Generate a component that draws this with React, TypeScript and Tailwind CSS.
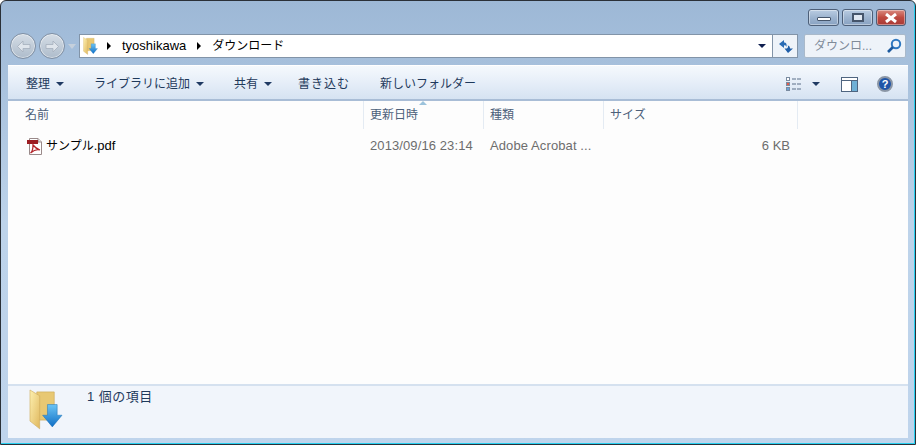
const FONT = "font-['Liberation_Sans','Noto_Sans_CJK_JP',sans-serif]"

function Caret({ className = 'border-t-[#1f3a63]' }: { className?: string }) {
  return <span className={`inline-block h-0 w-0 border-x-[4px] border-t-[4px] border-x-transparent ${className}`} />
}

function Crumb({ className }: { className: string }) {
  return <span className={`inline-block h-0 w-0 shrink-0 border-y-[4px] border-l-[4px] border-y-transparent border-l-black ${className}`} />
}

function FolderIcon({ size }: { size: number }) {
  return (
    <svg width={size} height={size * 1.2} viewBox="0 0 35 42">
      <defs>
        <linearGradient id={`f${size}`} x1="0" y1="0" x2="1" y2="1">
          <stop offset="0" stopColor="#fdf0b0" />
          <stop offset="1" stopColor="#e0b85e" />
        </linearGradient>
        <linearGradient id={`a${size}`} x1="0" y1="0" x2="0" y2="1">
          <stop offset="0" stopColor="#6cc4f4" />
          <stop offset="1" stopColor="#0f6fc6" />
        </linearGradient>
      </defs>
      <path d="M8 3 H26 V32 H8 Z" fill="#e8c873" stroke="#c9a552" strokeWidth="0.6" />
      <path d="M1 1 L11 7 V41 L1 33 Z" fill={`url(#f${size})`} stroke="#cda85a" strokeWidth="0.6" />
      <path d="M19 16 H29 V27 H34 L24 39 L14 27 H19 Z" fill={`url(#a${size})`} stroke="#1a6fb5" strokeWidth="0.5" />
    </svg>
  )
}

function PdfIcon() {
  return (
    <svg width="17" height="17" viewBox="0 0 17 17">
      <path d="M3.500 .5 H12 L15.500 4 V16.500 H3.500 Z" fill="#fff" stroke="#9a8a8a" />
      <path d="M12 .5 V4 H15.500" fill="#e8e8e8" stroke="#9a8a8a" />
      <rect x="1" y="2" width="11" height="4" fill="#9c1c22" />
      <path d="M7 7 C7 12 6 14 4.500 15 C8 12 11 11 14 12 C11 11 8.500 9 7 7 Z" fill="none" stroke="#b3262c" strokeWidth="1.300" />
    </svg>
  )
}

function WinBtn({ w, red, children }: { w: string; red?: boolean; children: React.ReactNode }) {
  return (
    <div
      className={`flex h-[17px] items-center justify-center rounded-[3px] border border-[#4d5f78] shadow-[inset_0_0_0_1px_rgba(255,255,255,0.4)] ${w} ${
        red ? 'bg-gradient-to-b from-[#d98a80] via-[#bf4a40] to-[#a83a36]' : 'bg-gradient-to-b from-[#b9cce2] via-[#9db4cf] to-[#88a2c2]'
      }`}
    >
      {children}
    </div>
  )
}

function NavCircle({ dir }: { dir: 'l' | 'r' }) {
  return (
    <div className="flex h-[26px] w-[26px] items-center justify-center rounded-full border border-[#7f8fa3] bg-gradient-to-b from-[#d5dde6] to-[#aebccb] shadow-[inset_0_0_0_1px_rgba(255,255,255,0.5)]">
      <svg width="15" height="13" viewBox="0 0 15 13">
        <path
          d={dir === 'l' ? 'M7 1 L1.500 6.500 L7 12 V8.500 H14 V4.500 H7 Z' : 'M8 1 L13.500 6.500 L8 12 V8.500 H1 V4.500 H8 Z'}
          fill="#dfe5ec"
          stroke="#a4afbc"
          strokeWidth="0.8"
        />
      </svg>
    </div>
  )
}

const ACTIONS = [
  { label: '整理', caret: true, cls: 'ml-[18px] w-[68px]' },
  { label: 'ライブラリに追加', caret: true, cls: 'w-[140px]' },
  { label: '共有', caret: true, cls: 'w-[50px]' },
  { label: '書き込む', caret: false, cls: 'ml-[14px] w-[82px] tracking-[1px]' },
  { label: '新しいフォルダー', caret: false, cls: 'w-[110px]' },
]

const COLUMNS = [
  { label: '名前', cls: 'w-[356px] pl-[17px]' },
  { label: '更新日時', cls: 'w-[120px] pl-[6px]' },
  { label: '種類', cls: 'w-[120px] pl-[6px]' },
  { label: 'サイズ', cls: 'w-[194px] pl-[6px]' },
]

export default function App() {
  return (
    <div className={`${FONT} flex h-[445px] w-[916px] flex-col overflow-hidden rounded-t-[6px] border-t border-l border-r border-b border-[#2a3038] bg-gradient-to-b from-[#9db8d6] via-[#bdd3ea] to-[#bfd4ec] text-[12px] shadow-[inset_-1px_-1px_0_#28d0f0]`}>
      {/* title bar */}
      <div className="flex h-[25px] shrink-0 items-end justify-end gap-[3px] pr-[9px]">
        <WinBtn w="w-[31px]"><span className="mt-[2px] h-[4px] w-[14px] rounded-[1px] border border-[#45556b] bg-white" /></WinBtn>
        <WinBtn w="w-[31px]"><span className="h-[9px] w-[12px] border-2 border-[#45556b] bg-[#dfe7f1]" /></WinBtn>
        <WinBtn w="w-[30px]" red>
          <svg width="14" height="10" viewBox="0 0 14 10">
            <path d="M2 1 L12 9 M12 1 L2 9" stroke="#fff" strokeWidth="3" />
          </svg>
        </WinBtn>
      </div>

      {/* nav row */}
      <div className="mt-[8px] flex h-[24px] shrink-0 items-center pl-[9px]">
        <div className="flex gap-[3px]">
          <NavCircle dir="l" />
          <NavCircle dir="r" />
        </div>
        <span className="mx-[3px] h-0 w-0 border-x-[4px] border-t-[5px] border-x-transparent border-t-[#c5d0dc]" />
        <div className="flex h-[24px] w-[719px] items-center border border-[#8294a8] bg-white">
          <span className="ml-[3px] flex"><FolderIcon size={15} /></span>
          <Crumb className="ml-[9px]" />
          <span className="ml-[11px] text-[13px] text-black">tyoshikawa</span>
          <Crumb className="ml-[11px]" />
          <span className="ml-[11px] text-black">ダウンロード</span>
          <span className="ml-auto mr-[6px] flex"><Caret className="border-t-[#0f1f50]" /></span>
          <div className="flex h-full w-[25px] items-center justify-center border-l border-[#8294a8] bg-[#eef3f9]">
            <svg width="17" height="15" viewBox="0 0 17 15">
              <path d="M7 1 L2 5 L7 9 V6.500 C8 6 9 6.500 9.500 8 C10 4.500 9 3.500 7 3.500 Z" fill="#2a6cb5" />
              <path d="M11 14 L16 9.500 L13 9.500 C13 7.500 12 6.500 10.500 6.500 C11.500 7.500 11 8.500 10 9.500 H7.500 Z" fill="#1f5ea8" />
            </svg>
          </div>
        </div>
        <div className="ml-[6px] flex h-[24px] w-[102px] items-center justify-between rounded-[2px] border border-[#a9b9ca] bg-[#eef3f9] pl-[9px] pr-[3px] text-[#7f8b99]">
          <span>ダウンロ...</span>
          <svg width="16" height="16" viewBox="0 0 16 16">
            <circle cx="10" cy="6" r="4.200" fill="none" stroke="#2f78c0" strokeWidth="2" />
            <path d="M7 9 L2 14" stroke="#1d5a9e" strokeWidth="2.600" />
          </svg>
        </div>
      </div>

      {/* window body */}
      <div className="mx-[7px] mt-[7px] flex min-h-0 flex-1 flex-col">
        <div className="flex h-[36px] shrink-0 items-center border-t border-t-white border-b-2 border-b-[#a9bdd6] bg-gradient-to-b from-[#f5f9fd] via-[#e6eef8] to-[#d6e3f2] pt-[3px] text-[#1e395b]">
          {ACTIONS.map((a) => (
            <span key={a.label} className={`flex items-center gap-[6px] whitespace-nowrap ${a.cls}`}>
              {a.label}
              {a.caret && <Caret />}
            </span>
          ))}
          <div className="ml-auto flex items-center pr-[15px]">
            <svg width="16" height="14" viewBox="0 0 16 14">
              <rect x=".5" y=".5" width="3" height="3" fill="#fff" stroke="#7a8ba0" />
              <rect x=".5" y="5.500" width="3" height="3" fill="#e05a4a" stroke="#7a8ba0" />
              <rect x=".5" y="10.500" width="3" height="3" fill="#6aa2d8" stroke="#7a8ba0" />
              <path d="M6 2 H15 M6 7 H15 M6 12 H15" stroke="#5b6f88" strokeDasharray="4 1" />
            </svg>
            <span className="ml-[10px] flex"><Caret /></span>
            <svg className="ml-[21px]" width="17" height="15" viewBox="0 0 17 15">
              <rect x=".5" y=".5" width="16" height="14" fill="#fff" stroke="#4f6580" />
              <path d="M.5 3.500 H16.500" stroke="#4f6580" />
              <rect x="11" y="4" width="5" height="10" fill="#6fb0d6" />
              <path d="M10.500 4 V14" stroke="#4f6580" />
            </svg>
            <span className="ml-[19px] flex h-[16px] w-[16px] items-center justify-center rounded-full border-2 border-[#8b96a5] bg-[#1f55a8] text-[11px] font-bold leading-none text-white">?</span>
          </div>
        </div>

        {/* file list */}
        <div className="relative flex-1 bg-[#fdfdfd]">
          <div className="flex h-[28px] text-[#4c607a]">
            {COLUMNS.map((c) => (
              <div key={c.label} className={`flex h-full items-center border-r border-[#e4ebf3] ${c.cls}`}>{c.label}</div>
            ))}
          </div>
          <span className="absolute left-[411px] top-0 h-0 w-0 border-x-[4px] border-b-[4px] border-x-transparent border-b-[#9cc3dc]" />
          <div className="mt-[6px] flex h-[22px] items-center text-[13px]">
            <div className="flex w-[356px] items-center pl-[18px] text-black">
              <PdfIcon />
              <span className="ml-[3px]"><span className="text-[12px]">サンプル</span>.pdf</span>
            </div>
            <div className="w-[120px] pl-[6px] tracking-[0.1px] text-[#6d6d6d]">2013/09/16 23:14</div>
            <div className="w-[120px] whitespace-nowrap pl-[6px] tracking-[0.1px] text-[#6d6d6d]">Adobe Acrobat ...</div>
            <div className="w-[186px] text-right text-[#6d6d6d]">6 KB</div>
          </div>
        </div>

        {/* details pane */}
        <div className="flex h-[54px] shrink-0 border-t-2 border-[#d5e1ef] bg-[#f1f5fb]">
          <div className="ml-[21px] mt-[3px]"><FolderIcon size={34} /></div>
          <span className="ml-[24px] mt-[1px] text-[13px] tracking-[0.5px] text-[#1e395b]">1 個の項目</span>
        </div>
      </div>
      <div className="h-[6px] shrink-0" />
    </div>
  )
}
